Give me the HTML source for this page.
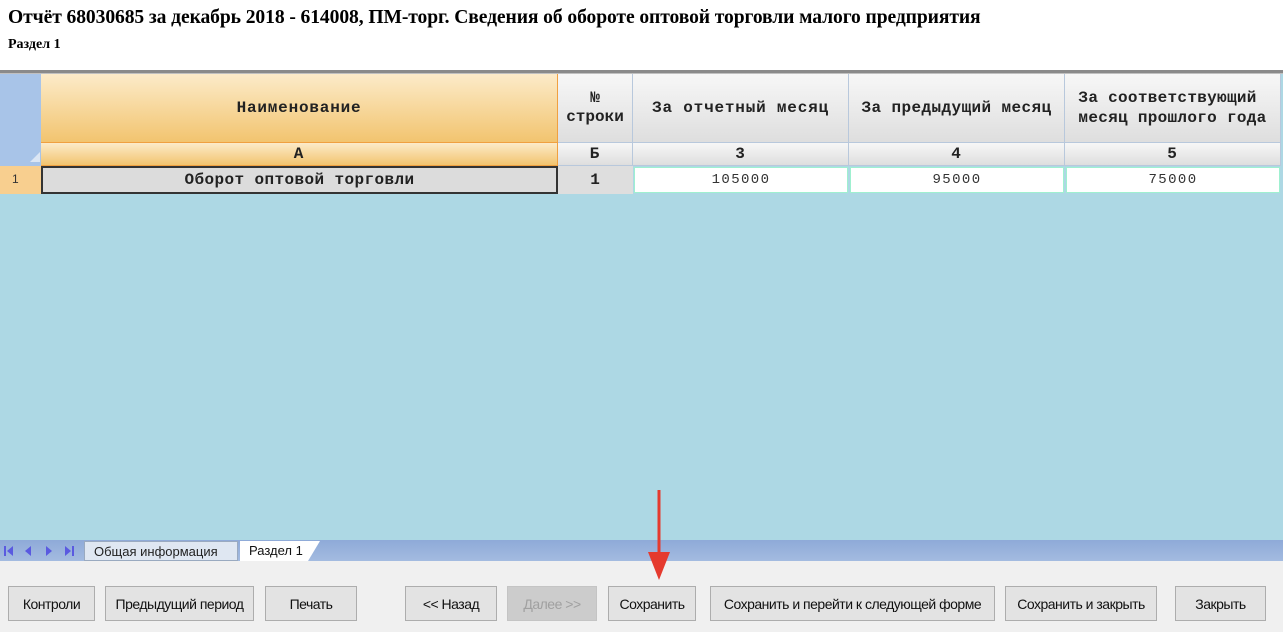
<!DOCTYPE html>
<html><head><meta charset="utf-8"><style>
*{margin:0;padding:0;box-sizing:border-box}
body{width:1283px;height:632px;background:#fff;position:relative;overflow:hidden;font-family:"Liberation Sans",sans-serif}
.a{position:absolute}
.t1{left:8px;top:7px;font:bold 19.6px "Liberation Serif",serif;color:#000;white-space:nowrap;letter-spacing:-0.1px}
.t2{left:8px;top:37px;font:bold 14px "Liberation Serif",serif}
.mono{font-family:"Liberation Mono",monospace;font-weight:bold;font-size:16px;letter-spacing:0.8px;color:#222}
.hc{display:flex;align-items:center;justify-content:center;text-align:center;background:linear-gradient(#f7f7f7,#dedede);border-right:1px solid #b8c8dc;border-bottom:1px solid #b8c8dc}
.org{background:linear-gradient(#fcebc9,#f2c46f);border-right:1px solid #f0a040;border-bottom:1px solid #f0a040}
.cell{display:flex;align-items:center;justify-content:center;background:#fff;border:1px solid #9ff0d0;font-family:"Liberation Mono",monospace;font-size:14px;letter-spacing:1.4px;color:#333}
.btn{top:586px;height:35px;background:#e3e3e3;border:1px solid #adadad;display:flex;align-items:center;justify-content:center;font-size:14px;color:#111;letter-spacing:-0.5px}
</style></head><body>
<div class="a t1">Отчёт 68030685 за декабрь 2018 - 614008, ПМ-торг. Сведения об обороте оптовой торговли малого предприятия</div>
<div class="a t2">Раздел 1</div>
<div class="a" style="left:0;top:70px;width:1283px;height:4px;background:#8a8a8a;border-bottom:1px solid #c0c0c0"></div>
<div class="a" style="left:0;top:74px;width:1283px;height:466px;background:#add8e4"></div>
<div class="a" style="left:0;top:74px;width:41px;height:92px;background:#a8c4e8"></div>
<div class="a" style="left:30px;top:152px;width:0;height:0;border-left:10px solid transparent;border-bottom:10px solid #dbe6f4"></div>
<div class="a hc org mono" style="left:41px;top:74px;width:517px;height:69px">Наименование</div>
<div class="a hc org mono" style="left:41px;top:143px;width:517px;height:23px">А</div>
<div class="a hc mono" style="left:558px;top:74px;width:75px;height:69px;line-height:19px;letter-spacing:0">№<br>строки</div>
<div class="a hc mono" style="left:558px;top:143px;width:75px;height:23px">Б</div>
<div class="a hc mono" style="left:633px;top:74px;width:216px;height:69px">За отчетный месяц</div>
<div class="a hc mono" style="left:633px;top:143px;width:216px;height:23px">3</div>
<div class="a hc mono" style="left:849px;top:74px;width:216px;height:69px;letter-spacing:0.4px">За предыдущий месяц</div>
<div class="a hc mono" style="left:849px;top:143px;width:216px;height:23px">4</div>
<div class="a hc mono" style="left:1065px;top:74px;width:216px;height:69px;line-height:20px;text-align:left;letter-spacing:0.3px">За соответствующий<br>месяц прошлого года</div>
<div class="a hc mono" style="left:1065px;top:143px;width:216px;height:23px">5</div>
<div class="a" style="left:0;top:166px;width:41px;height:28px;background:#f8cf8f;font-size:12px;padding:6px 0 0 12px;color:#333">1</div>
<div class="a mono" style="left:41px;top:166px;width:517px;height:28px;background:#dcdcdc;border:2px solid #333;display:flex;align-items:center;justify-content:center;letter-spacing:0.4px">Оборот оптовой торговли</div>
<div class="a mono" style="left:558px;top:166px;width:75px;height:28px;background:#dedede;display:flex;align-items:center;justify-content:center">1</div>
<div class="a cell" style="left:634px;top:167px;width:214px;height:26px">105000</div>
<div class="a cell" style="left:850px;top:167px;width:214px;height:26px">95000</div>
<div class="a cell" style="left:1066px;top:167px;width:214px;height:26px">75000</div>
<div class="a" style="left:0;top:540px;width:1283px;height:21px;background:linear-gradient(#8eaad8,#a3bbe0)"></div>
<svg class="a" style="left:0;top:543px" width="84" height="16"><g fill="#5a5ae0"><rect x="4" y="3" width="2" height="10"/><polygon points="13,3 13,13 7,8"/><polygon points="31,3 31,13 25,8"/><polygon points="46,3 46,13 52,8"/><polygon points="65,3 65,13 71,8"/><rect x="72" y="3" width="2" height="10"/></g></svg>
<div class="a" style="left:84px;top:541px;width:154px;height:20px;background:#dfe7f2;border:1px solid #9aaac0;font-size:13px;padding:2px 0 0 9px;color:#222">Общая информация</div>
<div class="a" style="left:240px;top:541px;width:80px;height:20px;background:#fff;font-size:13px;padding:2px 0 0 9px;color:#111;clip-path:polygon(0 0,100% 0,85% 100%,0 100%)">Раздел 1</div>
<div class="a" style="left:0;top:561px;width:1283px;height:71px;background:#f0f0f0"></div>
<div class="a btn" style="left:8px;width:87px">Контроли</div>
<div class="a btn" style="left:105px;width:149px">Предыдущий период</div>
<div class="a btn" style="left:265px;width:92px">Печать</div>
<div class="a btn" style="left:405px;width:92px">&lt;&lt; Назад</div>
<div class="a btn" style="left:507px;width:90px;background:#ccc;border-color:#c4c4c4;color:#a0a0a0">Далее &gt;&gt;</div>
<div class="a btn" style="left:608px;width:88px">Сохранить</div>
<div class="a btn" style="left:710px;width:285px">Сохранить и перейти к следующей форме</div>
<div class="a btn" style="left:1005px;width:152px">Сохранить и закрыть</div>
<div class="a btn" style="left:1175px;width:91px">Закрыть</div>
<svg class="a" style="left:645px;top:490px" width="30" height="95"><line x1="14" y1="0" x2="14" y2="70" stroke="#e53a2e" stroke-width="3"/><polygon points="3,62 25,62 14,90" fill="#e53a2e"/></svg>
</body></html>
